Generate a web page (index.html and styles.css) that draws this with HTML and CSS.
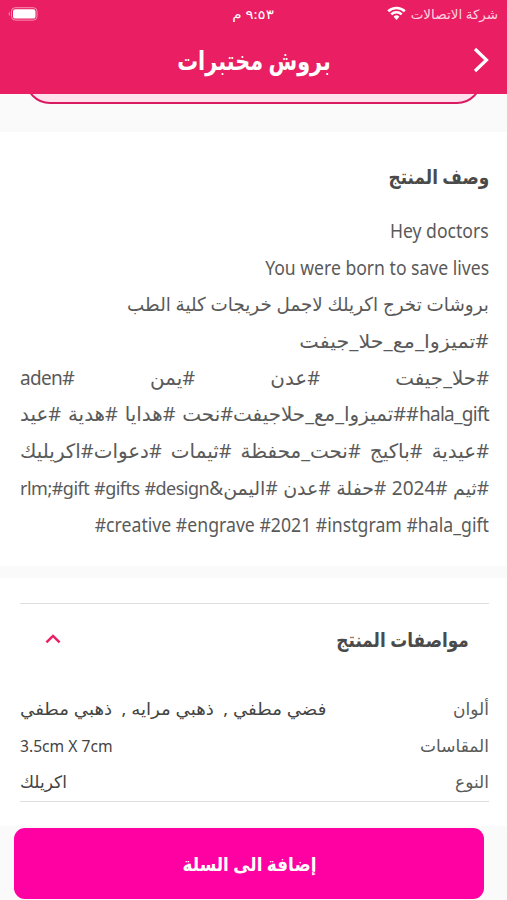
FILE: index.html
```html
<!DOCTYPE html>
<html lang="ar" dir="rtl">
	<head>
		<meta charset="utf-8" />
		<title>بروش مختبرات</title>
		<link rel="stylesheet" href="styles.css">
	</head>
	<body>
		<header>
			<div class="status">
				<div class="carrier">
					<span>شركة الاتصالات</span>
					<svg width="19" height="15" viewBox="0 0 19 15">
						<path d="M1.2 5.3a12 12 0 0 1 16.6 0M4.3 8.4a7.5 7.5 0 0 1 10.4 0" fill="none" stroke="#fff" stroke-width="2.6"/>
						<path d="M6.6 10.7a4.2 4.2 0 0 1 5.8 0L9.5 14z" fill="#fff"/>
					</svg>
				</div>
				<span class="time">٩:٥٣ م</span>
				<svg class="battery" width="30" height="14" viewBox="0 0 30 14">
					<rect x="3.5" y=".7" width="25.5" height="12.4" rx="3.6" fill="none" stroke="#f592b2"/>
					<rect x="5" y="2.2" width="22.5" height="9.4" rx="2.2" fill="#fff"/>
					<path d="M1.8 4.8a2.5 2.5 0 0 0 0 4.2z" fill="#f592b2"/>
				</svg>
			</div>
			<div class="titlebar">
				<h1><span>بروش مختبرات</span></h1>
				<svg class="back" width="16" height="26" viewBox="0 0 16 26">
					<path d="M2 2l11.5 11L2 24" fill="none" stroke="#fff" stroke-width="3.2"/>
				</svg>
			</div>
		</header>

		<div class="options">
			<div class="option"></div>
		</div>

		<section class="description">
			<h2><span>وصف المنتج</span></h2>
			<p class="l1" dir="ltr"><span>Hey doctors</span></p>
			<p class="l2" dir="ltr"><span>You were born to save lives</span></p>
			<p class="l3"><span>بروشات تخرج اكريلك لاجمل خريجات كلية الطب</span></p>
			<p class="l4"><span>#تميزوا_مع_حلا_جيفت</span></p>
			<p class="l5 full">#حلا_جيفت #عدن #يمن #<i>aden</i></p>
			<p class="l6 full"><i>hala_gift</i>##تميزوا_مع_حلاجيفت#نحت #هدايا #هدية #عيد</p>
			<p class="l7 full">#عيدية #باكيج #نحت_محفظة #ثيمات #دعوات#اكريليك</p>
			<p class="l8 full">#ثيم #2024 #حفلة #عدن #اليمن&amp;<i>rlm;#gift #gifts #design</i></p>
			<p class="l9" dir="ltr"><span>#creative #engrave #2021 #instgram #hala_gift</span></p>
		</section>

		<section class="specs">
			<div class="specs-title">
				<h2><span>مواصفات المنتج</span></h2>
				<svg width="16" height="10" viewBox="0 0 16 10">
					<path d="M1.4 8.3L8 1.9l6.6 6.4" fill="none" stroke="#e91e63" stroke-width="2.5"/>
				</svg>
			</div>
			<dl>
				<div class="r1"><dt>ألوان</dt><dd><span>فضي مطفي ,&nbsp; ذهبي مرايه ,&nbsp; ذهبي مطفي</span></dd></div>
				<div class="r2"><dt>المقاسات</dt><dd dir="ltr"><span>3.5cm X 7cm</span></dd></div>
				<div class="r3"><dt>النوع</dt><dd><span>اكريلك</span></dd></div>
			</dl>
		</section>

		<footer>
			<button><span>إضافة الى السلة</span></button>
		</footer>
	</body>
</html>
```

FILE: styles.css
```css
* {
	box-sizing:border-box;
}
body {
	margin:0;
	height:900px;
	overflow:hidden;
	background:#fafafa;
	color:#5a5a5a;
	font-family:"Noto Sans", "DejaVu Sans", sans-serif;
}
h1, h2, p, dl, dd {
	margin:0;
}
svg {
	display:block;
	flex:none;
}
span {
	display:inline-block;
	white-space:nowrap;
	transform-origin:right;
}
header {
	position:relative;
	z-index:1;
	height:94px;
	background:#e91e63;
	color:#fff;
}
.status {
	display:grid;
	grid-template-columns:1fr auto 1fr;
	align-items:center;
	height:27px;
	padding:0 9px 0 8px;
	font-size:13px;
}
.carrier {
	display:flex;
	align-items:center;
	gap:8px;
	color:#ffd3e1;
}
.carrier span {
	transform:scaleX(1.04);
}
.time {
	transform:scaleX(1.16);
	transform-origin:center;
}
.battery {
	justify-self:end;
}
.titlebar {
	display:grid;
	grid-template-columns:1fr auto 1fr;
	align-items:center;
	height:66px;
	padding:0 18px;
}
.titlebar h1 {
	grid-column:2;
	font-size:26px;
	line-height:40px;
}
h1 span {
	transform:scaleX(.8);
	transform-origin:center;
}
.back {
	grid-column:1;
	grid-row:1;
}
.options {
	display:flex;
	align-items:flex-end;
	height:38px;
	padding:0 25px 28px;
	overflow:hidden;
}
.option {
	flex:1;
	height:60px;
	border:2px solid #d81b60;
	border-radius:25px;
	background:#ffe0ec;
}
.description {
	height:434px;
	padding:26px 18px 0 20px;
	background:#fff;
	font-size:19px;
}
h2 {
	color:#4a4a4a;
	font-size:20px;
	line-height:37px;
}
h2 span {
	transform:scaleX(.845);
}
.description h2 {
	margin-bottom:18px;
}
p {
	height:36.7px;
	line-height:36.7px;
	text-align:right;
	white-space:nowrap;
}
p.full {
	text-align:justify;
	text-align-last:justify;
	white-space:normal;
}
p i {
	font-style:normal;
	letter-spacing:-.7px;
}
.l1 span, .l2 span {
	transform:scaleX(.925);
}
.l3 span {
	transform:scaleX(.965);
}
.l4 span {
	transform:scaleX(1.09);
}
.l5, .l6, .l7 {
	font-size:19.9px;
}
.l5 i, .l6 i {
	font-size:19px;
}
.l8 i {
	font-size:18px;
	letter-spacing:-.5px;
}
.l9 span {
	transform:scaleX(.93);
}
.specs {
	height:248px;
	margin-top:12px;
	padding:25px 18px 0 20px;
	background:#fff;
}
.specs-title {
	display:flex;
	align-items:center;
	justify-content:space-between;
	height:88px;
	padding:0 20px 17px 25px;
	border-top:1px solid #dedede;
}
dl {
	height:111px;
	border-bottom:1px solid #dedede;
	font-size:17px;
}
dl div {
	display:flex;
	justify-content:space-between;
	height:36.7px;
	line-height:36.7px;
}
dd {
	color:#444;
}
dd span {
	transform-origin:left;
}
.r1 dd span {
	transform:scaleX(1.07);
}
.r2 dd span {
	transform:scaleX(.92);
}
footer {
	padding:2px 23px 0 14px;
}
button {
	display:block;
	width:100%;
	height:71px;
	border:0;
	border-radius:11px;
	background:#ff00a2;
	color:#fff;
	font:bold 19px "Noto Sans", "DejaVu Sans", sans-serif;
}
button span {
	transform:scaleX(.887);
	transform-origin:center;
}
```
